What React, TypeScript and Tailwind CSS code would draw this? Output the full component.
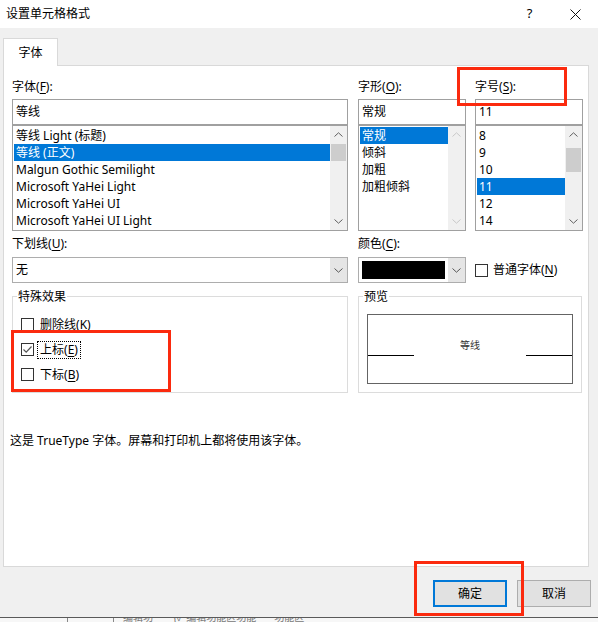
import React from "react";

function Chevron({ dir, color = "#606060" }: { dir: "up" | "down"; color?: string }) {
  return (
    <svg width="9" height="5" viewBox="0 0 9 5">
      <path
        d={dir === "up" ? "M0.5 4.5 L4.5 0.8 L8.5 4.5" : "M0.5 0.5 L4.5 4.2 L8.5 0.5"}
        fill="none"
        stroke={color}
        strokeWidth="1"
      />
    </svg>
  );
}

function Label({ text, k }: { text: string; k: string }) {
  return (
    <div className="h-[17px] leading-[17px] whitespace-nowrap">
      {text}(<u className="underline-offset-2">{k}</u>):
    </div>
  );
}

function ListBox({
  items,
  selected,
  thumb,
  disabled,
}: {
  items: string[];
  selected: string;
  thumb?: string;
  disabled?: boolean;
}) {
  const arrow = disabled ? "#c8c8c8" : "#606060";
  return (
    <div className="flex h-[106px] border border-[#a0a0a0] bg-white">
      <div className="flex-1 pt-[1px] pl-[1px] overflow-hidden">
        {items.map((it) => (
          <div
            key={it}
            className={`h-[17px] leading-[17px] pl-[2px] whitespace-nowrap ${
              it === selected ? "bg-[#0078d7] text-white" : ""
            }`}
          >
            {it}
          </div>
        ))}
      </div>
      <div className="w-[17px] bg-[#f0f0f0] flex flex-col">
        <div className="h-[17px] flex items-center justify-center">
          <Chevron dir="up" color={arrow} />
        </div>
        <div className="flex-1">
          {thumb && <div className={`${thumb} mx-[1px] bg-[#cdcdcd]`} />}
        </div>
        <div className="h-[17px] flex items-center justify-center">
          <Chevron dir="down" color={arrow} />
        </div>
      </div>
    </div>
  );
}

function TextBox({ value }: { value: string }) {
  return (
    <div className="h-[26px] border border-[#a0a0a0] bg-white pl-[3px] leading-[24px]">{value}</div>
  );
}

function DropButton() {
  return (
    <div className="w-[17px] bg-[#e5e5e5] flex items-center justify-center">
      <Chevron dir="down" color="#555" />
    </div>
  );
}

function Check({
  checked,
  text,
  k,
  focus,
}: {
  checked?: boolean;
  text: string;
  k: string;
  focus?: boolean;
}) {
  return (
    <div className="flex items-center h-[25px]">
      <div className="w-[13px] h-[13px] border border-[#333333] bg-white flex items-center justify-center">
        {checked && (
          <svg width="11" height="11" viewBox="0 0 11 11">
            <path d="M1.5 5.5 L4.2 8.2 L9.5 2.5" fill="none" stroke="#555" strokeWidth="1.2" />
          </svg>
        )}
      </div>
      <span
        className={`ml-[3px] px-[2px] leading-[16px] border ${
          focus ? "border-dotted border-black" : "border-transparent"
        }`}
      >
        {text}(<u className="underline-offset-2">{k}</u>)
      </span>
    </div>
  );
}

export default function App() {
  return (
    <div className="relative w-[598px] h-[622px] overflow-hidden bg-[#f0f0f0] text-[12px] text-black font-['Noto_Sans','Noto_Sans_CJK_SC',sans-serif]">
      {/* Title bar */}
      <div className="h-[28px] bg-white flex items-center">
        <div className="pl-[6px] flex-1">设置单元格格式</div>
        <div className="w-[45px] h-full flex items-center justify-center text-[13px]">?</div>
        <div className="w-[46px] h-full flex items-center justify-center">
          <svg width="11" height="11" viewBox="0 0 11 11">
            <path d="M0.5 0.5 L10.5 10.5 M10.5 0.5 L0.5 10.5" stroke="#111" strokeWidth="1" />
          </svg>
        </div>
      </div>

      {/* Tabs */}
      <div className="pt-[10px] pl-[3px]">
        <div className="relative z-10 -mb-px w-[55px] h-[28px] bg-white border border-b-0 border-[#d9d9d9] flex items-center justify-center">
          字体
        </div>
      </div>

      {/* Panel */}
      <div className="ml-[3px] w-[586px] h-[502px] bg-white border border-[#d9d9d9] pl-[8px] pt-[12px]">
        {/* Row 1 */}
        <div className="flex">
          <div className="w-[336px]">
            <Label text="字体" k="F" />
            <div className="mt-[4px]">
              <TextBox value="等线" />
              <ListBox
                items={[
                  "等线 Light (标题)",
                  "等线 (正文)",
                  "Malgun Gothic Semilight",
                  "Microsoft YaHei Light",
                  "Microsoft YaHei UI",
                  "Microsoft YaHei UI Light",
                ]}
                selected="等线 (正文)"
                thumb="mt-[1px] h-[17px]"
              />
            </div>
          </div>
          <div className="w-[108px] ml-[10px]">
            <Label text="字形" k="O" />
            <div className="mt-[4px]">
              <TextBox value="常规" />
              <ListBox items={["常规", "倾斜", "加粗", "加粗倾斜"]} selected="常规" disabled />
            </div>
          </div>
          <div className="w-[108px] ml-[9px]">
            <Label text="字号" k="S" />
            <div className="mt-[4px]">
              <TextBox value="11" />
              <ListBox
                items={["8", "9", "10", "11", "12", "14"]}
                selected="11"
                thumb="mt-[5px] h-[24px]"
              />
            </div>
          </div>
        </div>

        {/* Row 2 */}
        <div className="flex mt-[4px]">
          <div className="w-[336px]">
            <Label text="下划线" k="U" />
            <div className="mt-[5px] flex h-[26px] border border-[#adadad] bg-white">
              <div className="flex-1 pl-[3px] leading-[24px]">无</div>
              <DropButton />
            </div>
          </div>
          <div className="w-[108px] ml-[10px]">
            <Label text="颜色" k="C" />
            <div className="mt-[5px] flex h-[26px] border border-[#adadad] bg-white">
              <div className="flex-1 p-[3px]">
                <div className="h-full bg-black" />
              </div>
              <DropButton />
            </div>
          </div>
          <div className="ml-[9px] pt-[22px]">
            <div className="h-[26px] flex items-center">
              <div className="w-[13px] h-[13px] border border-[#333333] bg-white" />
              <span className="ml-[4px] px-[1px]">
                普通字体(<u className="underline-offset-2">N</u>)
              </span>
            </div>
          </div>
        </div>

        {/* Row 3 */}
        <div className="flex mt-[5px]">
          <fieldset className="w-[336px] h-[105px] border border-[#dcdcdc]">
            <legend className="ml-[4px] px-[1px] leading-[17px]">特殊效果</legend>
            <div className="pt-[7px] pl-[8px]">
              <Check text="删除线" k="K" />
              <Check text="上标" k="E" checked focus />
              <Check text="下标" k="B" />
            </div>
          </fieldset>
          <fieldset className="w-[224px] h-[105px] ml-[10px] border border-[#dcdcdc]">
            <legend className="ml-[4px] px-[1px] leading-[17px]">预览</legend>
            <div className="mt-[9px] mx-[8px] h-[70px] border border-[#646464] flex items-center justify-between">
              <div className="w-[46px] h-px bg-black mt-[12px]" />
              <div className="text-[10px] leading-[14px] text-[#333] mb-[8px]">等线</div>
              <div className="w-[46px] h-px bg-black mt-[12px]" />
            </div>
          </fieldset>
        </div>

        <div className="mt-[39px] -ml-[2px] leading-[17px]">
          这是 TrueType 字体。屏幕和打印机上都将使用该字体。
        </div>
      </div>

      {/* Buttons */}
      <div className="flex justify-end pt-[13px] pr-[7px] gap-[10px]">
        <button className="w-[74px] h-[27px] border-2 border-[#0078d7] bg-[#e1e1e1]">确定</button>
        <button className="w-[74px] h-[27px] border border-[#adadad] bg-[#e1e1e1]">取消</button>
      </div>

      {/* Window behind */}
      <div className="mt-[10px] h-[5px] border-t border-[#5a5a5a] bg-[#f7f7f7] overflow-hidden flex text-[10px] text-[#777] leading-[10px]">
        <div className="w-[68px] border-r border-[#888]" />
        <div className="w-[46px] border-r border-[#888]" />
        <div className="ml-[9px] -mt-[6px]">编辑功</div>
        <div className="ml-[20px] -mt-[6px]">{"{✓ 编辑功能区功能"}</div>
        <div className="ml-[18px] -mt-[6px]">功能区</div>
      </div>

      {/* Annotation boxes */}
      <div className="absolute left-[457px] top-[67px] w-[110px] h-[39px] border-[3px] border-[#fb2a0e] pointer-events-none" />
      <div className="absolute left-[11px] top-[330px] w-[160px] h-[62px] border-[3px] border-[#fb2a0e] pointer-events-none" />
      <div className="absolute left-[414px] top-[561px] w-[110px] h-[55px] border-[3px] border-[#fb2a0e] pointer-events-none" />
    </div>
  );
}
